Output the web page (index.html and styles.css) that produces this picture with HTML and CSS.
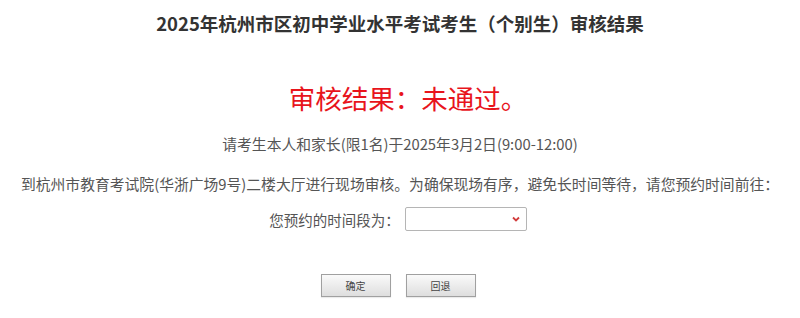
FILE: index.html
```html
<!DOCTYPE html>
<html lang="zh-CN">
<head>
<meta charset="utf-8">
<title>审核结果</title>
<link rel="stylesheet" href="styles.css">
</head>
<body>
<div class="page">
  <h1 class="title">2025年杭州市区初中学业水平考试考生（个别生）审核结果</h1>
  <div class="result">审核结果：未通过。</div>
  <p class="line line1">请考生本人和家长(限1名)于2025年3月2日(9:00-12:00)</p>
  <p class="line line2">到杭州市教育考试院(华浙广场9号)二楼大厅进行现场审核。为确保现场有序，避免长时间等待，请您预约时间前往：</p>
  <div class="pick">
    <span class="pick-label">您预约的时间段为：</span>
    <div class="select">
      <svg class="chev" width="8" height="6" viewBox="0 0 8 6"><path d="M1 1.5 L4 4.5 L7 1.5" fill="none" stroke="#d23c3c" stroke-width="1.8"/></svg>
    </div>
  </div>
  <div class="buttons">
    <button class="btn">确定</button>
    <button class="btn">回退</button>
  </div>
</div>
</body>
</html>
```
FILE: styles.css
```css
html, body {
  margin: 0;
  padding: 0;
  background: #ffffff;
}
body {
  font-family: "Noto Sans CJK SC", "Noto Sans", sans-serif;
  color: #555;
}
.page {
  width: 800px;
  height: 318px;
  display: flex;
  flex-direction: column;
  align-items: center;
  overflow: hidden;
}
.title {
  margin: 10px 0 0 0;
  font-size: 18.5px;
  line-height: 26px;
  font-weight: 700;
  color: #333;
}
.result {
  margin-top: 43px;
  padding-left: 16px;
  font-size: 26.5px;
  line-height: 38px;
  color: #e8141c;
}
.line {
  margin: 0;
  font-size: 14.8px;
  line-height: 20px;
  color: #555;
}
.line1 {
  margin-top: 17px;
}
.line2 {
  margin-top: 20px;
}
.pick {
  margin-top: 13px;
  display: flex;
  align-items: center;
  gap: 5px;
  height: 24px;
  margin-left: -4px;
}
.pick-label {
  font-size: 14.5px;
  color: #555;
}
.select {
  height: 22px;
  border: 1px solid #b5b5b5;
  border-radius: 2px;
  background: #fff;
  display: flex;
  align-items: center;
  justify-content: flex-end;
  padding-right: 6px;
  box-sizing: content-box;
  width: 114px;
}
.chev {
  display: block;
}
.buttons {
  margin-top: 43px;
  margin-left: -4px;
  display: flex;
  gap: 15px;
}
.btn {
  width: 70px;
  height: 23px;
  padding: 0;
  border: 1px solid #a0a0a0;
  border-radius: 0;
  background: linear-gradient(#fafafa, #dedede);
  font-family: "Noto Sans CJK SC", sans-serif;
  font-size: 10px;
  color: #444;
  box-shadow: 0 1px 1px rgba(0,0,0,0.08);
}
```
